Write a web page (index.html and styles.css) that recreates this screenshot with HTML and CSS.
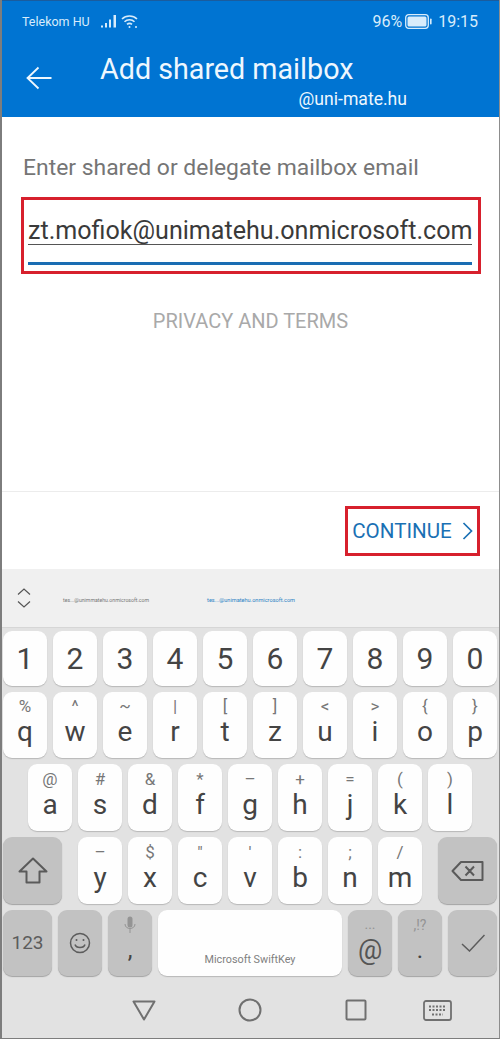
FILE: index.html
```html
<!DOCTYPE html>
<html lang="en">
<head>
    <meta charset="UTF-8">
    <meta name="viewport" content="width=device-width, initial-scale=1.0">
    <title>Add shared mailbox</title>
    <link rel="stylesheet" href="styles.css">
</head>
<body>
    <div class="screen">
        <header class="app-header">
            <div class="status-bar">
                <span class="carrier">Telekom HU</span>
                <svg class="signal" width="17" height="14" viewBox="0 0 17 14"><path d="M1 11.5h2v2H1zM5 9h2v4.500H5zM9 5.500h2v8H9zM13.500 1h2.500v12.500h-2.500z" fill="#d8ecfb"/></svg>
                <svg class="wifi" width="18" height="15" viewBox="0 0 18 15" fill="none" stroke="#d8ecfb" stroke-width="1.600"><path d="M1 5c4-4 11-4 15 0M3.500 7.800c2.700-2.700 7.300-2.700 10 0M6 10.400c1.500-1.300 3.500-1.300 5 0"/><circle cx="8.500" cy="13" r="1" fill="#d8ecfb" stroke="none"/><circle cx="15" cy="13" r="1" fill="#d8ecfb" stroke="none"/></svg>
                <span class="status-right">96%</span>
                <svg class="battery" width="27" height="15" viewBox="0 0 27 15"><rect x="0.700" y="0.700" width="22.600" height="13.600" rx="3" fill="none" stroke="#d8ecfb" stroke-width="1.300"/><rect x="2.500" y="2.500" width="19" height="10" rx="1.500" fill="#d8ecfb"/><rect x="25" y="4.500" width="1.600" height="6" rx="0.800" fill="#d8ecfb"/></svg>
                <span class="clock">19:15</span>
            </div>
            <div class="title-row">
                <svg class="back" width="26" height="24" viewBox="0 0 26 24" fill="none" stroke="#eef7fe" stroke-width="1.800"><path d="M25.500 12H1.500M12.500 1.500 1.500 12l11 10.500"/></svg>
                <h1>Add shared mailbox</h1>
            </div>
            <div class="account">@uni-mate.hu</div>
        </header>

        <main class="content">
            <label class="field-label">Enter shared or delegate mailbox email</label>
            <div class="field-box">
                <div class="field">
                    <span class="field-text">zt.mofiok@unimatehu.onmicrosoft.com</span>
                </div>
            </div>
            <a class="privacy">PRIVACY AND TERMS</a>
        </main>

        <div class="action-bar">
            <a class="continue">
                CONTINUE
                <svg width="11" height="18" viewBox="0 0 11 18" fill="none" stroke="#1a70b4" stroke-width="1.700"><path d="M1.500 1l8 8-8 8"/></svg>
            </a>
        </div>

        <div class="suggestions">
            <svg class="updown" width="14" height="20" viewBox="0 0 14 20" fill="none" stroke="#555" stroke-width="1.200"><path d="M1 6.500 7 1l6 5.500M1 13.500 7 19l6-5.500"/></svg>
            <span class="suggestion">tes...@unimmatehu.onmicrosoft.com</span>
            <span class="suggestion active">tes...@unimatehu.onmicrosoft.com</span>
        </div>

        <div class="keyboard">
            <div class="key-row">
                <div class="key num">1</div><div class="key num">2</div><div class="key num">3</div><div class="key num">4</div><div class="key num">5</div>
                <div class="key num">6</div><div class="key num">7</div><div class="key num">8</div><div class="key num">9</div><div class="key num">0</div>
            </div>
            <div class="key-row">
                <div class="key"><span class="hint">%</span>q</div><div class="key"><span class="hint">^</span>w</div><div class="key"><span class="hint">~</span>e</div>
                <div class="key"><span class="hint">|</span>r</div><div class="key"><span class="hint">[</span>t</div><div class="key"><span class="hint">]</span>z</div>
                <div class="key"><span class="hint">&lt;</span>u</div><div class="key"><span class="hint">&gt;</span>i</div><div class="key"><span class="hint">{</span>o</div><div class="key"><span class="hint">}</span>p</div>
            </div>
            <div class="key-row indent">
                <div class="key"><span class="hint">@</span>a</div><div class="key"><span class="hint">#</span>s</div><div class="key"><span class="hint">&amp;</span>d</div>
                <div class="key"><span class="hint">*</span>f</div><div class="key"><span class="hint">–</span>g</div><div class="key"><span class="hint">+</span>h</div>
                <div class="key"><span class="hint">=</span>j</div><div class="key"><span class="hint">(</span>k</div><div class="key"><span class="hint">)</span>l</div>
            </div>
            <div class="key-row">
                <div class="key dark wide-side">
                    <svg width="30" height="27" viewBox="0 0 30 27" fill="none" stroke="#5a5a5a" stroke-width="2" stroke-linejoin="round"><path d="M15 1.500 1.500 14.500H8.500V25.500H21.500V14.500H28.500Z"/></svg>
                </div>
                <div class="key"><span class="hint">–</span>y</div><div class="key"><span class="hint">$</span>x</div><div class="key"><span class="hint">"</span>c</div>
                <div class="key"><span class="hint">'</span>v</div><div class="key"><span class="hint">:</span>b</div><div class="key"><span class="hint">;</span>n</div><div class="key"><span class="hint">/</span>m</div>
                <div class="key dark wide-side">
                    <svg width="33" height="22" viewBox="0 0 33 22" fill="none" stroke="#5a5a5a" stroke-width="2" stroke-linejoin="round"><path d="M10 2H31.500V20H10L1.500 11ZM14.500 6.500l8.500 9M23 6.500l-8.500 9"/></svg>
                </div>
            </div>
            <div class="key-row">
                <div class="key dark side-49 label-123">123</div>
                <div class="key dark">
                    <svg width="22" height="22" viewBox="0 0 22 22" fill="none" stroke="#5c5c5c" stroke-width="1.500"><circle cx="11" cy="11" r="9.500"/><path d="M6 12.500c1.200 4 8.800 4 10 0"/><circle cx="7.500" cy="8" r="1" fill="#5c5c5c" stroke="none"/><circle cx="14.500" cy="8" r="1" fill="#5c5c5c" stroke="none"/></svg>
                </div>
                <div class="key dark">
                    <span class="hint hint-icon"><svg width="12" height="18" viewBox="0 0 12 18"><rect x="3.500" y="0.500" width="5" height="11" rx="2.500" fill="#949494"/><path d="M1 8c0 6 10 6 10 0M6 13v4" fill="none" stroke="#949494" stroke-width="1"/></svg></span>
                    <span class="comma">,</span>
                </div>
                <div class="key space"><span class="space-label">Microsoft SwiftKey</span></div>
                <div class="key dark"><span class="hint dots">...</span><span class="at">@</span></div>
                <div class="key dark"><span class="hint dots">,!?</span><span class="comma">.</span></div>
                <div class="key dark side-49">
                    <svg width="24" height="18" viewBox="0 0 24 18" fill="none" stroke="#5c5c5c" stroke-width="1.500"><path d="M1 10l7.500 7L23.500 1"/></svg>
                </div>
            </div>
            <nav class="nav-bar">
                <svg width="24" height="21" viewBox="0 0 24 21" fill="none" stroke="#707070" stroke-width="2" stroke-linejoin="round"><path d="M1.500 1.500h21L12 19.500Z"/></svg>
                <svg class="nav-home" width="24" height="24" viewBox="0 0 24 24" fill="none" stroke="#707070" stroke-width="2"><circle cx="12" cy="12" r="10.500"/></svg>
                <svg class="nav-recent" width="22" height="22" viewBox="0 0 22 22" fill="none" stroke="#707070" stroke-width="2" stroke-linejoin="round"><rect x="1.500" y="1.500" width="19" height="19" rx="1"/></svg>
                <svg class="nav-keys" width="29" height="21" viewBox="0 0 29 21" fill="none" stroke="#707070" stroke-width="1.800"><rect x="1" y="1" width="27" height="19" rx="2"/><path d="M6 6.500h17M6 10h17M9 14.500h11" stroke-dasharray="2 1.500"/></svg>
            </nav>
        </div>
    </div>
</body>
</html>
```

FILE: styles.css
```css
* {
    margin: 0;
    padding: 0;
    box-sizing: border-box;
}

body {
    font-family: 'Roboto', 'Noto Sans', sans-serif;
    width: 500px;
    height: 1039px;
    background-color: white;
}

.screen {
    display: flex;
    flex-direction: column;
    height: 1039px;
    border-left: 2px solid #7d7d7d;
    border-right: 1px solid #8d8d8d;
    border-bottom: 1px solid #7d7d7d;
    overflow: hidden;
}

/* blue top part */
.app-header {
    height: 117px;
    margin-left: -2px;
    margin-right: -1px;
    background-color: #0074d2;
    border-top: 1px solid #1a5c9e;
    color: #eef7fe;
    flex-shrink: 0;
}

.status-bar {
    display: flex;
    align-items: center;
    height: 40px;
    padding: 0 22px;
    font-size: 13px;
    color: #d8ecfb;
}

.carrier {
    margin-right: 10px;
    font-size: 12.500px;
}

.wifi {
    margin-left: 4px;
}

.status-right {
    margin-left: auto;
    margin-right: 3px;
    font-size: 16px;
}

.clock {
    margin-left: 6px;
    font-size: 16px;
}

.title-row {
    display: flex;
    align-items: flex-start;
    height: 46px;
    padding-left: 26px;
}

.title-row h1 {
    margin-top: 9px;
    margin-left: 48px;
    font-size: 28.700px;
    font-weight: 400;
    line-height: 38px;
}

.back {
    margin-top: 25px;
}

.account {
    margin-top: 2px;
    padding-right: 93px;
    font-size: 17.600px;
    line-height: 20px;
    text-align: right;
}

/* form */
.content {
    display: flex;
    flex-direction: column;
    flex: 1;
    padding-top: 38px;
}

.field-label {
    margin-left: 21px;
    font-size: 22.900px;
    line-height: 26px;
    color: #757575;
}

.field-box {
    width: 460px;
    height: 77px;
    margin: 16px 0 0 19px;
    padding: 0 6px 0 4px;
    border: 3px solid #d7202d;
}

.field {
    height: 65px;
    overflow: hidden;
    border-bottom: 3px solid #1a6db3;
    padding-top: 17px;
    white-space: nowrap;
}

.field-text {
    display: inline-block;
    font-size: 25.100px;
    line-height: 27px;
    color: #3a3a3a;
    border-bottom: 1px solid #555;
}

.privacy {
    margin-top: 35px;
    font-size: 20px;
    line-height: 24px;
    text-align: center;
    color: #a9a9a9;
}

.action-bar {
    display: flex;
    justify-content: flex-end;
    align-items: center;
    height: 78px;
    padding-right: 19px;
    border-top: 1px solid #ececec;
    flex-shrink: 0;
}

.continue {
    display: flex;
    align-items: center;
    justify-content: center;
    gap: 10px;
    width: 135px;
    height: 50px;
    border: 3px solid #d7202d;
    font-size: 20.600px;
    color: #1a70b4;
}

/* keyboard */
.suggestions {
    display: flex;
    align-items: center;
    height: 58px;
    background-color: #f0f0f0;
    flex-shrink: 0;
}

.updown {
    margin-left: 15px;
}

.suggestion {
    margin-top: 3px;
    margin-left: 32px;
    font-size: 5.200px;
    color: #777;
}

.suggestion.active {
    margin-left: 58px;
    font-size: 5.600px;
    color: #2a80c4;
}

.keyboard {
    display: flex;
    flex-direction: column;
    height: 411px;
    padding: 3px 1px 0;
    background-color: #e2e2e2;
    border-top: 1px solid #d6d6d6;
    flex-shrink: 0;
}

.key-row {
    display: flex;
    gap: 6px;
    height: 66px;
    margin-bottom: 6px;
    flex-shrink: 0;
}

.key-row:first-child {
    height: 55px;
}

.key-row:nth-child(3),
.key-row:nth-child(4) {
    height: 67px;
}

.key-row.indent {
    padding-left: 25px;
}

.key {
    display: flex;
    flex-direction: column;
    align-items: center;
    justify-content: center;
    width: 44px;
    font-size: 28px;
    line-height: 28px;
    color: #444;
    background-color: #fefefe;
    border-radius: 9px;
    box-shadow: 0 1px 1px #b8b8b8;
}

.key.num {
    font-size: 30px;
}

.hint {
    height: 24px;
    margin-top: -10px;
    font-size: 17px;
    line-height: 24px;
    color: #777;
}

.key.dark {
    background-color: #c2c2c2;
    box-shadow: 0 1px 1px #a4a4a4;
}

.wide-side {
    width: 59px;
}

.key-row > .wide-side:first-child {
    margin-right: 10px;
}

.key-row > .wide-side:last-child {
    margin-left: 10px;
}

.side-49 {
    width: 49px;
}

.label-123 {
    font-size: 19px;
    color: #5c5c5c;
}

.key.space {
    width: 184px;
    justify-content: flex-end;
}

.space-label {
    margin-bottom: 9px;
    font-size: 10.800px;
    line-height: 14px;
    color: #808080;
}

.hint-icon {
    display: flex;
    align-items: center;
    color: #949494;
}

.dots {
    font-size: 14px;
    color: #949494;
}

.comma {
    font-size: 24px;
    line-height: 26px;
}

.at {
    font-size: 27px;
    line-height: 28px;
    color: #555;
}

.nav-bar {
    display: flex;
    align-items: center;
    flex: 1;
    padding-left: 129px;
}

.nav-home {
    margin-left: 82px;
}

.nav-recent {
    margin-left: 83px;
}

.nav-keys {
    margin-left: 56px;
}
```
